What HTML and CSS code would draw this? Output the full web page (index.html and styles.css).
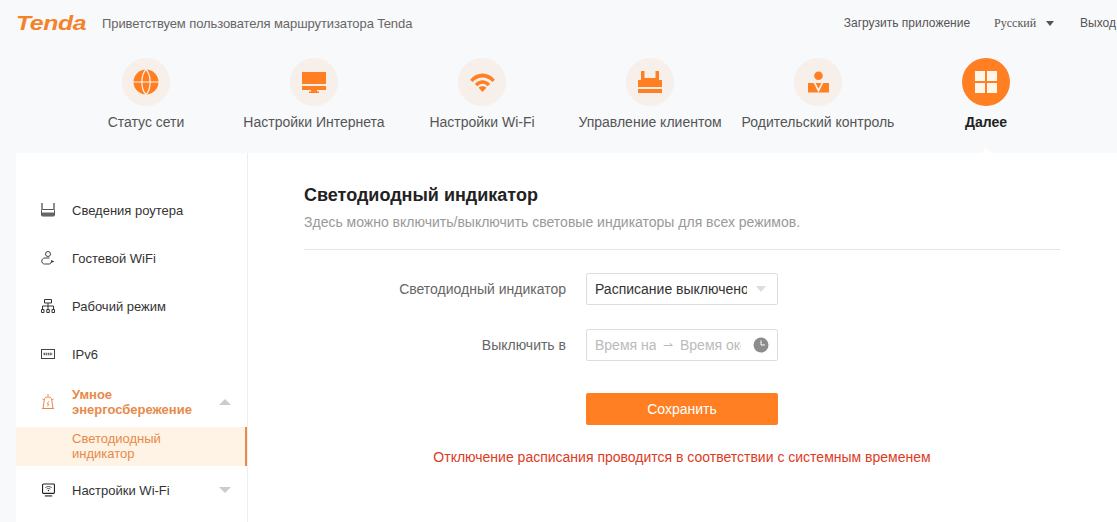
FILE: index.html
```html
<!DOCTYPE html>
<html lang="ru">
<head>
    <meta charset="UTF-8">
    <meta name="viewport" content="width=device-width, initial-scale=1.0">
    <title>Tenda</title>
    <link rel="stylesheet" href="styles.css">
</head>
<body>
    <header class="top-bar">
        <div class="logo"><span class="logo-text">Tenda</span></div>
        <div class="welcome">Приветствуем пользователя маршрутизатора Tenda</div>
        <div class="top-links">
            <span class="top-link">Загрузить приложение</span>
            <span class="top-link lang">Русский <i class="lang-arrow"></i></span>
            <span class="top-link">Выход</span>
        </div>
    </header>

    <nav class="main-nav">
        <div class="nav-item">
            <div class="nav-circle">
                <svg width="26" height="26" viewBox="0 0 26 26">
                    <circle cx="13" cy="13" r="12.500" fill="#ff7f22"/>
                    <path d="M0 13H26M13 0.500C7.500 6 7.500 20 13 25.500M13 0.500C18.500 6 18.500 20 13 25.500" fill="none" stroke="#fbf3ec" stroke-width="1.200"/>
                </svg>
            </div>
            <div class="nav-label">Статус сети</div>
        </div>
        <div class="nav-item">
            <div class="nav-circle">
                <svg width="24" height="21" viewBox="0 0 24 21">
                    <path d="M0 0H24V12H0ZM0 14H24V18H15V19.500H17V21H7V19.500H9V18H0Z" fill="#ff7f22"/>
                </svg>
            </div>
            <div class="nav-label">Настройки Интернета</div>
        </div>
        <div class="nav-item">
            <div class="nav-circle">
                <svg width="25" height="19" viewBox="0 0 26 20">
                    <path d="M0 7C7 -1.500 19 -1.500 26 7L23.500 9.500C17.500 3 8.500 3 2.500 9.500Z" fill="#ff7f22"/>
                    <path d="M5 11.500C9.500 6.500 16.500 6.500 21 11.500L18.500 14C15 10.500 11 10.500 7.500 14Z" fill="#ff7f22"/>
                    <path d="M9 15.500C11 13.500 15 13.500 17 15.500L13 20Z" fill="#ff7f22"/>
                </svg>
            </div>
            <div class="nav-label">Настройки Wi-Fi</div>
        </div>
        <div class="nav-item">
            <div class="nav-circle">
                <svg width="24" height="22" viewBox="0 0 24 22">
                    <path d="M3 0H6.500V7H17.500V0H21V9H24V16H0V9H3ZM0 18H24V22H0Z" fill="#ff7f22"/>
                </svg>
            </div>
            <div class="nav-label">Управление клиентом</div>
        </div>
        <div class="nav-item">
            <div class="nav-circle">
                <svg width="21" height="22" viewBox="0 0 22 22">
                    <circle cx="11" cy="4.500" r="4.500" fill="#ff7f22"/>
                    <path d="M0 12H6L11 22H0ZM16 12H22V22H11ZM8 12H14L11 18Z" fill="#ff7f22"/>
                </svg>
            </div>
            <div class="nav-label">Родительский контроль</div>
        </div>
        <div class="nav-item nav-item-active">
            <div class="nav-circle">
                <svg width="22" height="22" viewBox="0 0 22 22">
                    <path d="M0 0H10V10H0ZM12 0H22V10H12ZM0 12H10V22H0ZM12 12H22V22H12Z" fill="#fff6ea"/>
                </svg>
            </div>
            <div class="nav-label">Далее</div>
        </div>
    </nav>

    <div class="page-card">
        <aside class="sidebar">
            <div class="side-item">
                <div class="side-icon">
                    <svg width="14" height="14" viewBox="0 0 14 14">
                        <path d="M1 0V9M13 0V9" fill="none" stroke="#444" stroke-width="1.200"/>
                        <rect x="0.500" y="6.500" width="13" height="6.500" rx="1" fill="#fff" stroke="#555"/>
                        <path d="M1 9.500H13V13H1Z" fill="#666"/>
                    </svg>
                </div>
                <span class="side-text">Сведения роутера</span>
            </div>
            <div class="side-item">
                <div class="side-icon">
                    <svg width="14" height="14" viewBox="0 0 14 14">
                        <circle cx="7" cy="3" r="2.500" fill="none" stroke="#444"/>
                        <path d="M8.500 7H4C2 7 0.800 8.500 0.800 10C0.800 11.500 1.500 13 3.500 13H8C9.500 13 10 12 10 11" fill="none" stroke="#444"/>
                        <path d="M10 9L13.500 10.500L10 12" fill="#444"/>
                    </svg>
                </div>
                <span class="side-text">Гостевой WiFi</span>
            </div>
            <div class="side-item">
                <div class="side-icon">
                    <svg width="14" height="14" viewBox="0 0 14 14">
                        <path d="M3.500 0.500H10.500V4H3.500ZM7 4V7M1.500 10V7H12.500V10M7 7V10" fill="none" stroke="#333"/>
                        <path d="M0.500 10.500H3V13.500H0.500ZM5.800 10.500H8.300V13.500H5.800ZM11 10.500H13.500V13.500H11Z" fill="none" stroke="#333"/>
                    </svg>
                </div>
                <span class="side-text">Рабочий режим</span>
            </div>
            <div class="side-item">
                <div class="side-icon">
                    <svg width="14" height="10" viewBox="0 0 14 10">
                        <rect x="0.500" y="0.500" width="13" height="9" fill="none" stroke="#444"/>
                        <path d="M2.500 5H11.500" stroke="#666" stroke-width="2.500" stroke-dasharray="1.600 0.600"/>
                    </svg>
                </div>
                <span class="side-text">IPv6</span>
            </div>
            <div class="side-item side-item-open">
                <div class="side-icon">
                    <svg width="14" height="16" viewBox="0 0 14 16">
                        <path d="M3.500 4.500C5 2.500 9 2.500 10.500 4.500L12 14.500H2ZM1 14.500H13M7 0V2.500M1.500 5L3 6M12.500 5L11 6" fill="none" stroke="#e8894a"/>
                        <path d="M8 7L6 10H8L6.300 12.500" fill="none" stroke="#e8894a" stroke-width="0.800"/>
                    </svg>
                </div>
                <span class="side-text">Умное энергосбережение</span>
                <i class="side-arrow side-arrow-up"></i>
            </div>
            <div class="side-sub">Светодиодный индикатор</div>
            <div class="side-item">
                <div class="side-icon">
                    <svg width="13" height="14" viewBox="0 0 14 14">
                        <rect x="0.600" y="0.600" width="12.800" height="10" rx="1" fill="none" stroke="#222" stroke-width="1.200"/>
                        <path d="M3 13.400H11" stroke="#222" stroke-width="1.200"/>
                        <path d="M3.500 4.500C6 2.800 8 2.800 10.500 4.500M5 6C6.500 5 7.500 5 9 6" fill="none" stroke="#222" stroke-width="0.800"/>
                        <circle cx="7" cy="7.500" r="0.800" fill="#222"/>
                    </svg>
                </div>
                <span class="side-text">Настройки Wi-Fi</span>
                <i class="side-arrow"></i>
            </div>
        </aside>

        <main class="content">
            <h1 class="content-title">Светодиодный индикатор</h1>
            <p class="content-desc">Здесь можно включить/выключить световые индикаторы для всех режимов.</p>
            <div class="divider"></div>

            <div class="form-row">
                <label class="form-label">Светодиодный индикатор</label>
                <div class="field">
                    <input class="field-input field-select" value="Расписание выключено" readonly>
                    <i class="field-arrow"></i>
                </div>
            </div>
            <div class="form-row form-row-last">
                <label class="form-label">Выключить в</label>
                <div class="field">
                    <input class="field-input time-input" placeholder="Время начала" readonly>
                    <span class="time-sep">⇀</span>
                    <input class="field-input time-input" placeholder="Время окончания" readonly>
                    <svg class="clock" width="16" height="16" viewBox="0 0 16 16">
                        <circle cx="8" cy="8" r="7.500" fill="#8c8c8c"/>
                        <path d="M8 3.500V8H12" fill="none" stroke="#fff" stroke-width="1"/>
                    </svg>
                </div>
            </div>
            <div class="form-row">
                <div class="form-label"></div>
                <button class="save-button">Сохранить</button>
            </div>
            <p class="form-note">Отключение расписания проводится в соответствии с системным временем</p>
        </main>
    </div>
</body>
</html>
```

FILE: styles.css
```css
* {
    box-sizing: border-box;
}

html, body {
    height: 100%;
}

body {
    margin: 0;
    overflow: hidden;
    display: flex;
    flex-direction: column;
    background-color: #f8f9fb;
    font-family: "Liberation Sans", Arial, sans-serif;
    color: #333;
}

.top-bar {
    display: flex;
    align-items: center;
    height: 46px;
    padding-left: 16px;
    flex-shrink: 0;
}

.logo {
    width: 86px;
}

.logo-text {
    display: block;
    font-size: 21px;
    font-weight: bold;
    font-style: italic;
    letter-spacing: -0.3px;
    color: #f5822a;
    transform: scaleX(1.18);
    transform-origin: left center;
}

.welcome {
    font-size: 13px;
    letter-spacing: -0.09px;
    color: #666;
}

.top-links {
    display: flex;
    align-items: center;
    margin-left: auto;
    margin-right: 1px;
    gap: 24px;
}

.top-link {
    font-size: 12px;
    color: #555;
}

.lang {
    display: flex;
    align-items: center;
    gap: 10px;
    padding-right: 2px;
    font-family: "Liberation Serif", serif;
}

.lang-arrow {
    width: 0;
    height: 0;
    border-left: 4px solid transparent;
    border-right: 4px solid transparent;
    border-top: 5px solid #555;
}

.main-nav {
    display: flex;
    justify-content: center;
    height: 107px;
    padding-top: 12px;
    padding-left: 15px;
    flex-shrink: 0;
}

.nav-item {
    position: relative;
    display: flex;
    flex-direction: column;
    align-items: center;
    width: 168px;
}

.nav-circle {
    display: flex;
    align-items: center;
    justify-content: center;
    width: 48px;
    height: 48px;
    border-radius: 50%;
    background-color: #f7f0ea;
}

.nav-label {
    margin-top: 8px;
    font-size: 14px;
    line-height: 16px;
    white-space: nowrap;
    color: #555;
}

.nav-item-active .nav-circle {
    background-color: #ff7f22;
}

.nav-item-active .nav-label {
    font-weight: bold;
    color: #222;
}

/* little notch pointing at the open menu */
.nav-item-active::after {
    content: "";
    position: absolute;
    left: 50%;
    bottom: 0;
    margin-left: -5px;
    border-left: 5px solid transparent;
    border-right: 5px solid transparent;
    border-bottom: 5px solid #fff;
}

.page-card {
    display: flex;
    flex: 1;
    margin-left: 16px;
    background-color: #fff;
}

.sidebar {
    width: 232px;
    padding-top: 33px;
    border-right: 1px solid #eee;
    flex-shrink: 0;
}

.side-item {
    display: flex;
    align-items: center;
    min-height: 48px;
    padding-left: 24px;
    font-size: 13px;
    line-height: 15px;
    color: #333;
}

.side-icon {
    display: flex;
    align-items: center;
    justify-content: center;
    width: 16px;
    flex-shrink: 0;
}

.side-text {
    width: 147px;
    margin-left: 16px;
}

.side-item-open {
    min-height: 0;
    height: 49px;
    padding-bottom: 1px;
    font-weight: bold;
    color: #e8894a;
}

.side-arrow {
    width: 0;
    height: 0;
    border-left: 6px solid transparent;
    border-right: 6px solid transparent;
    border-top: 6px solid #ccc;
}

.side-arrow-up {
    border-top: 0;
    border-bottom: 6px solid #ccc;
}

.side-sub {
    height: 39px;
    padding: 4px 70px 0 56px;
    border-right: 2px solid #e8894a;
    background-color: #fef3e5;
    font-size: 13px;
    line-height: 15px;
    color: #e8894a;
}

.content {
    width: 756px;
    margin-left: 56px;
    padding-top: 32px;
}

.content-title {
    margin: 0;
    font-size: 18px;
    line-height: 20px;
    color: #222;
}

.content-desc {
    margin: 9px 0 0;
    font-size: 14px;
    line-height: 17px;
    color: #999;
}

.divider {
    height: 1px;
    margin: 18px 0 23px;
    background-color: #e5e5e5;
}

.form-row {
    display: flex;
    align-items: center;
    margin-bottom: 24px;
}

.form-row-last {
    margin-bottom: 32px;
}

.form-label {
    width: 262px;
    margin-right: 20px;
    text-align: right;
    font-size: 14px;
    color: #666;
}

.field {
    display: flex;
    align-items: center;
    width: 192px;
    height: 32px;
    padding: 0 7px 0 8px;
    border: 1px solid #ddd;
    border-radius: 2px;
    background-color: #fff;
}

.field-input {
    padding: 0;
    border: none;
    outline: none;
    background: none;
    font-family: inherit;
    font-size: 14px;
    color: #333;
}

.field-input::placeholder {
    color: #bbb;
    opacity: 1;
}

.field-select {
    width: 152px;
}

.field-arrow {
    width: 0;
    height: 0;
    margin-left: 9px;
    border-left: 5px solid transparent;
    border-right: 5px solid transparent;
    border-top: 6px solid #ddd;
}

.time-input {
    width: 61px;
}

.time-sep {
    width: 24px;
    text-align: center;
    font-size: 12px;
    color: #bbb;
}

.clock {
    margin-left: 12px;
    flex-shrink: 0;
}

.save-button {
    width: 192px;
    height: 32px;
    border: none;
    border-radius: 2px;
    background-color: #ff7f22;
    font-family: inherit;
    font-size: 14px;
    color: #fff;
    cursor: pointer;
}

.form-note {
    margin: 0;
    text-align: center;
    font-size: 14px;
    color: #dd3a24;
}
```
